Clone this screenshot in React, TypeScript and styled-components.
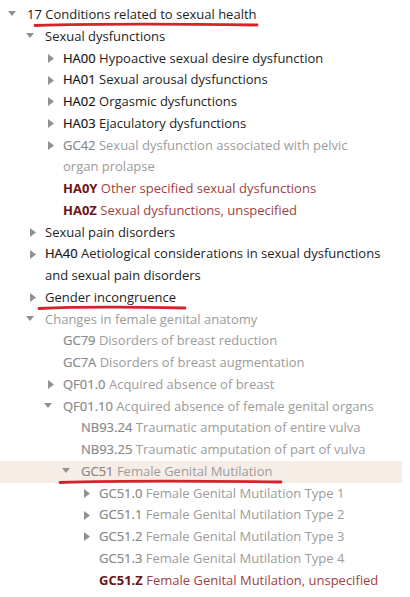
import React from "react";
import styled, { createGlobalStyle, css } from "styled-components";

const Global = createGlobalStyle`
  html, body { margin: 0; padding: 0; background: #ffffff; }
  body { font-family: "Open Sans", "Noto Sans", "Liberation Sans", sans-serif; }
`;

type Tone = "normal" | "muted" | "red";
type Toggle = "open" | "closed" | "none";

interface Mark {
  from: number;
  to: number;
}

interface NodeData {
  level: number;
  toggle: Toggle;
  code?: string;
  plainCode?: boolean;
  title: React.ReactNode;
  tone: Tone;
  highlight?: boolean;
  mark?: Mark;
}

const Tree = styled.div`
  width: 402px;
  padding-top: 4px;
  font-size: 13px;
  line-height: 21.75px;
`;

const Row = styled.div<{ $level: number; $highlight?: boolean }>`
  position: relative;
  display: flex;
  align-items: flex-start;
  padding-left: ${(p) => 8 + p.$level * 18}px;
  background: ${(p) => (p.$highlight ? "#f7ede7" : "transparent")};
`;

const ToggleBox = styled.span`
  flex: 0 0 19px;
  height: 21.75px;
  display: flex;
  align-items: center;
`;

const Caret = styled.svg<{ $open: boolean }>`
  display: block;
  fill: #919191;
  ${(p) =>
    p.$open
      ? css`
          width: 8px;
          height: 5px;
          margin-top: -2px;
        `
      : css`
          width: 6px;
          height: 9px;
          margin-left: 4px;
        `}
`;

const Label = styled.span<{ $tone: Tone }>`
  flex: 1 1 auto;
  color: ${(p) =>
    p.$tone === "red" ? "#a13f3f" : p.$tone === "muted" ? "#9c9c9c" : "#1e1e1e"};
`;

const Code = styled.span<{ $tone: Tone; $plain?: boolean }>`
  font-weight: ${(p) => (p.$plain ? 400 : p.$tone === "red" ? 700 : 400)};
  -webkit-text-stroke: ${(p) => (p.$plain || p.$tone === "red" ? "0" : "0.2px")};
  color: ${(p) =>
    p.$tone === "red" ? "#6c1515" : p.$tone === "muted" ? "#898989" : "#141414"};
`;

const Underline = styled.svg`
  position: absolute;
  top: 17px;
  height: 8px;
  overflow: visible;
  pointer-events: none;
`;

function CaretIcon({ open }: { open: boolean }) {
  return open ? (
    <Caret $open viewBox="0 0 8 5">
      <path d="M0 0 H8 L4 5 Z" />
    </Caret>
  ) : (
    <Caret $open={false} viewBox="0 0 6 9">
      <path d="M0 0 L6 4.5 L0 9 Z" />
    </Caret>
  );
}

function TreeRow({ node }: { node: NodeData }) {
  const { level, toggle, code, plainCode, title, tone, highlight, mark } = node;
  return (
    <Row $level={level} $highlight={highlight}>
      <ToggleBox>{toggle !== "none" && <CaretIcon open={toggle === "open"} />}</ToggleBox>
      <Label $tone={tone}>
        {code ? (
          <Code $tone={tone} $plain={plainCode}>
            {code}
          </Code>
        ) : null}{" "}
        {title}
      </Label>
      {mark && (
        <Underline
          style={{ left: mark.from, width: mark.to - mark.from }}
          viewBox={`0 0 ${mark.to - mark.from} 8`}
          preserveAspectRatio="none"
        >
          <path
            d={`M1 4.5 Q ${(mark.to - mark.from) * 0.35} 2.2 ${mark.to - mark.from - 1} 4`}
            stroke="#d3232b"
            strokeWidth="2.8"
            strokeLinecap="round"
            fill="none"
          />
        </Underline>
      )}
    </Row>
  );
}

const nodes: NodeData[] = [
  { level: 0, toggle: "open", code: "17", plainCode: true, title: "Conditions related to sexual health", tone: "normal", mark: { from: 34, to: 258 } },
  { level: 1, toggle: "open", title: "Sexual dysfunctions", tone: "normal" },
  { level: 2, toggle: "closed", code: "HA00", title: "Hypoactive sexual desire dysfunction", tone: "normal" },
  { level: 2, toggle: "closed", code: "HA01", title: "Sexual arousal dysfunctions", tone: "normal" },
  { level: 2, toggle: "closed", code: "HA02", title: "Orgasmic dysfunctions", tone: "normal" },
  { level: 2, toggle: "closed", code: "HA03", title: "Ejaculatory dysfunctions", tone: "normal" },
  {
    level: 2,
    toggle: "closed",
    code: "GC42",
    title: (
      <>
        Sexual dysfunction associated with pelvic
        <br />
        organ prolapse
      </>
    ),
    tone: "muted",
  },
  { level: 2, toggle: "none", code: "HA0Y", title: "Other specified sexual dysfunctions", tone: "red" },
  { level: 2, toggle: "none", code: "HA0Z", title: "Sexual dysfunctions, unspecified", tone: "red" },
  { level: 1, toggle: "closed", title: "Sexual pain disorders", tone: "normal" },
  {
    level: 1,
    toggle: "closed",
    code: "HA40",
    title: (
      <>
        Aetiological considerations in sexual dysfunctions
        <br />
        and sexual pain disorders
      </>
    ),
    tone: "normal",
  },
  { level: 1, toggle: "closed", title: "Gender incongruence", tone: "normal", mark: { from: 38, to: 186 } },
  { level: 1, toggle: "open", title: "Changes in female genital anatomy", tone: "muted" },
  { level: 2, toggle: "none", code: "GC79", title: "Disorders of breast reduction", tone: "muted" },
  { level: 2, toggle: "none", code: "GC7A", title: "Disorders of breast augmentation", tone: "muted" },
  { level: 2, toggle: "closed", code: "QF01.0", title: "Acquired absence of breast", tone: "muted" },
  { level: 2, toggle: "open", code: "QF01.10", title: "Acquired absence of female genital organs", tone: "muted" },
  { level: 3, toggle: "none", code: "NB93.24", title: "Traumatic amputation of entire vulva", tone: "muted" },
  { level: 3, toggle: "none", code: "NB93.25", title: "Traumatic amputation of part of vulva", tone: "muted" },
  { level: 3, toggle: "open", code: "GC51", title: "Female Genital Mutilation", tone: "muted", highlight: true, mark: { from: 59, to: 282 } },
  { level: 4, toggle: "closed", code: "GC51.0", title: "Female Genital Mutilation Type 1", tone: "muted" },
  { level: 4, toggle: "closed", code: "GC51.1", title: "Female Genital Mutilation Type 2", tone: "muted" },
  { level: 4, toggle: "closed", code: "GC51.2", title: "Female Genital Mutilation Type 3", tone: "muted" },
  { level: 4, toggle: "none", code: "GC51.3", title: "Female Genital Mutilation Type 4", tone: "muted" },
  { level: 4, toggle: "none", code: "GC51.Z", title: "Female Genital Mutilation, unspecified", tone: "red" },
];

export default function App() {
  return (
    <>
      <Global />
      <Tree>
        {nodes.map((n, i) => (
          <TreeRow key={i} node={n} />
        ))}
      </Tree>
    </>
  );
}
